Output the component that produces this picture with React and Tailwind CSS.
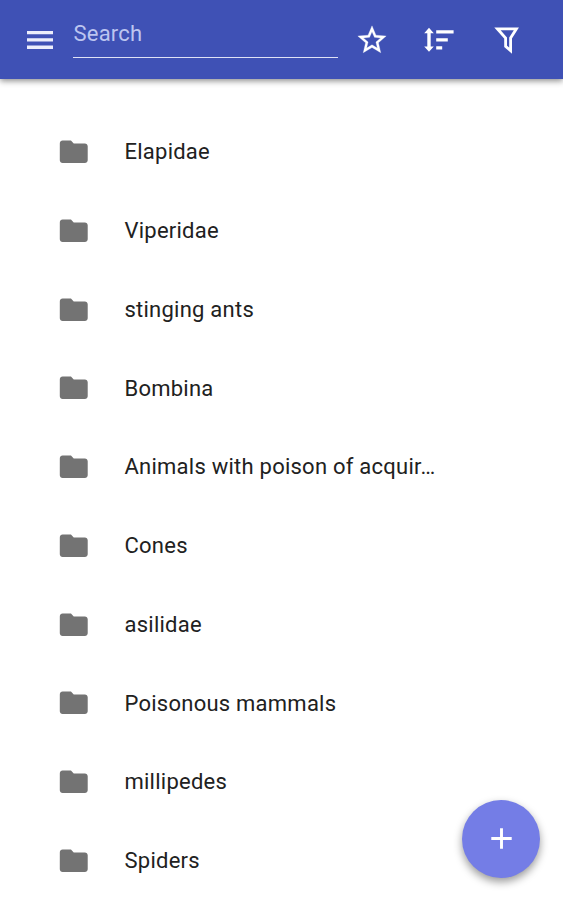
import React, { useState } from 'react';
import { MdFolder, MdAdd } from 'react-icons/md';

const FOLDERS = [
  'Elapidae',
  'Viperidae',
  'stinging ants',
  'Bombina',
  'Animals with poison of acquir…',
  'Cones',
  'asilidae',
  'Poisonous mammals',
  'millipedes',
  'Spiders',
];

function MenuIcon() {
  return (
    <svg width="34" height="34" viewBox="0 0 34 34" fill="currentColor">
      <path d="M4 8h26v3.3H4zM4 15.3h26v3.3H4zM4 22.6h26v3.3H4z" />
    </svg>
  );
}

function StarIcon() {
  return (
    <svg width="34" height="34" viewBox="0 0 24 24" fill="currentColor" stroke="currentColor" strokeWidth="0.2">
      <path d="m22 9.24-7.19-.62L12 2 9.19 8.63 2 9.24l5.46 4.73L5.82 21 12 17.27 18.18 21l-1.63-7.03L22 9.24zM12 15.4l-3.76 2.27 1-4.28-3.32-2.88 4.38-.38L12 6.1l1.71 4.04 4.38.38-3.32 2.88 1 4.28L12 15.4z" />
    </svg>
  );
}

function SortIcon() {
  return (
    <svg width="32" height="28" viewBox="0 0 32 28" fill="currentColor">
      <path d="M5 1.8 9.8 7.2H6.7v13.2h3.1L5 25.8.2 20.4h3.1V7.2H.2z" />
      <path d="M12.2 4.2h17.4v3.4H12.2zM12.2 12.3h11.6v3.3H12.2zM12.2 20.3h6v3.2h-6z" />
    </svg>
  );
}

function FilterIcon() {
  return (
    <svg width="26" height="30" viewBox="0 0 26 30" fill="none" stroke="currentColor" strokeWidth="2.8">
      <path d="M3.4 3.8h19L16.6 13v12.7l-5-4.4V13z" />
    </svg>
  );
}

export default function App() {
  const [search, setSearch] = useState('');

  return (
    <div className="relative h-[900px] w-[563px] overflow-hidden bg-white font-['Roboto',sans-serif]">
      <header className="flex h-[79px] items-center bg-[#3f51b5] pl-[23px] text-white shadow-[0_2px_6px_rgba(0,0,0,0.45)]">
        <button className="flex-shrink-0 text-[#eceefb]">
          <MenuIcon />
        </button>
        <input
          value={search}
          onChange={(e) => setSearch(e.target.value)}
          placeholder="Search"
          className="mb-[1px] ml-4 h-[38px] w-[265px] flex-shrink-0 border-b border-[#dfe2f6] pb-[10px] pl-[0.5px] text-[22px] leading-[26px] tracking-[0.2px] outline-none placeholder:text-[#bcc5f0]"
        />
        <button className="ml-[17px] flex-shrink-0">
          <StarIcon />
        </button>
        <button className="ml-[35px] flex-shrink-0">
          <SortIcon />
        </button>
        <button className="ml-[38px] flex-shrink-0">
          <FilterIcon />
        </button>
      </header>

      <ul className="pt-[34px]">
        {FOLDERS.map((name) => (
          <li key={name} className="flex h-[78.75px] items-center pl-[57px]">
            <MdFolder size={33.5} className="mb-px flex-shrink-0 text-[#737373]" />
            <span className="ml-[34px] whitespace-nowrap text-[22px] leading-7 tracking-[0.24px] text-[#212121]">
              {name}
            </span>
          </li>
        ))}
      </ul>

      <button className="absolute right-[23px] bottom-[22.5px] flex h-[78px] w-[78px] items-center justify-center rounded-full bg-[#747de6] text-white shadow-[0_4px_9px_rgba(0,0,0,0.4)]">
        <MdAdd size={35} />
      </button>
    </div>
  );
}
